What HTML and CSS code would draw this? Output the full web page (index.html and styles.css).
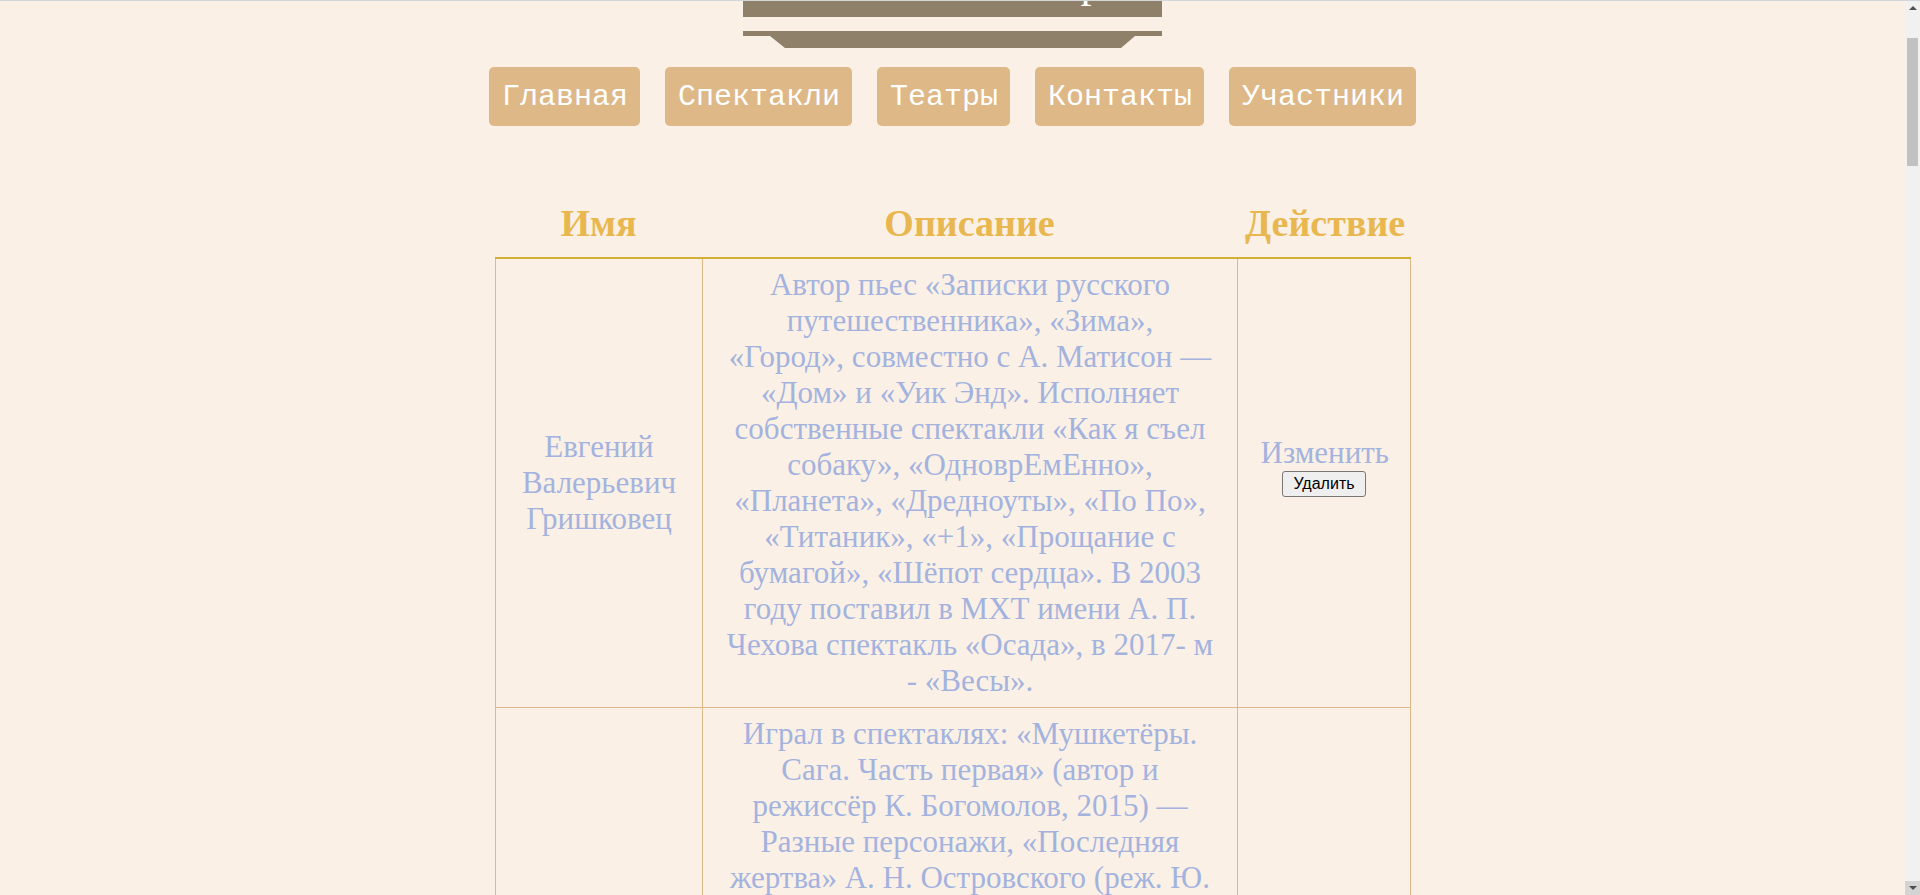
FILE: index.html
```html
<!DOCTYPE html>
<html lang="ru">
<head>
<meta charset="utf-8">
<title>Участники</title>
<link rel="stylesheet" href="styles.css">
</head>
<body>
<div class="topline"></div>
<div class="fake-scrollbar" aria-hidden="true">
  <div class="sb-btn sb-up"><span class="tri-up"></span></div>
  <div class="sb-thumb"></div>
  <div class="sb-fill"></div>
  <div class="sb-btn sb-down"><span class="tri-down"></span></div>
</div>
<header class="site-header">
  <div class="title-box"><h1 class="title">Любимый театр</h1></div>
  <div class="title-base"></div>
</header>
<nav class="nav">
  <a class="nav-btn" href="#">Главная</a>
  <a class="nav-btn" href="#">Спектакли</a>
  <a class="nav-btn" href="#">Театры</a>
  <a class="nav-btn" href="#">Контакты</a>
  <a class="nav-btn" href="#">Участники</a>
</nav>
<main class="content">
  <table class="people">
    <colgroup><col class="c-name"><col class="c-desc"><col class="c-act"></colgroup>
    <thead>
      <tr><th>Имя</th><th>Описание</th><th>Действие</th></tr>
    </thead>
    <tbody>
      <tr>
        <td>Евгений Валерьевич Гришковец</td>
        <td>Автор пьес «Записки русского путешественника», «Зима», «Город», совместно с А. Матисон — «Дом» и «Уик Энд». Исполняет собственные спектакли «Как я съел собаку», «ОдноврЕмЕнно», «Планета», «Дредноуты», «По По», «Титаник», «+1», «Прощание с бумагой», «Шёпот сердца». В 2003 году поставил в МХТ имени А. П. Чехова спектакль «Осада», в 2017- м - «Весы».</td>
        <td><a class="edit" href="#">Изменить</a><form class="del-form"><button type="button" class="del-btn">Удалить</button></form></td>
      </tr>
      <tr>
        <td>Игорь Альфредович Миркурбанов</td>
        <td>Играл в спектаклях: «Мушкетёры. Сага. Часть первая» (автор и режиссёр К. Богомолов, 2015) — Разные персонажи, «Последняя жертва» А. Н. Островского (реж. Ю. Бутусов, 2014) — Флор Федулыч Прибытков, «Карамазовы» по роману Ф. М. Достоевского (реж. К. Богомолов, 2013) — Фёдор Павлович Карамазов, «Идеальный муж. Комедия» (реж. К. Богомолов, 2013) — Лорд Горинг, «Околоноля» (реж. К. Богомолов, 2011) — Самуил Аронович. Лауреат премии «Золотая маска».</td>
        <td><a class="edit" href="#">Изменить</a><form class="del-form"><button type="button" class="del-btn">Удалить</button></form></td>
      </tr>
      <tr>
        <td>Константин Юрьевич Хабенский</td>
        <td>Народный артист России. Играл в спектаклях «Гамлет» (реж. Ю. Бутусов, 2005) — Гамлет, «Белая гвардия» М. А. Булгакова (реж. С. Женовач, 2004) — Алексей Турбин, «Кабала святош» (реж. А. Шапиро, 2001) — Людовик XIV, «Сирано де Бержерак» (реж. Н. Чусова, 2013) — Сирано де Бержерак, «Контрабас» П. Зюскинда (реж. Ю. Бутусов, 2015) — Музыкант. Основатель благотворительного фонда и художественный руководитель детских студий творческого развития.</td>
        <td><a class="edit" href="#">Изменить</a><form class="del-form"><button type="button" class="del-btn">Удалить</button></form></td>
      </tr>
      <tr>
        <td>Юлия Александровна Пересильд</td>
        <td>Заслуженная артистка России. Играла в спектаклях «Рассказы Шукшина» (реж. А. Херманис, 2008) — разные роли, «Гроза» А. Н. Островского (реж. А. Шапиро, 2011) — Катерина, «Пиковая дама» А. С. Пушкина (реж. К. Серебренников) — Лиза, «Человек-подушка» М. Макдонаха — Ариэль. Лауреат премий «Золотая маска» и «Хрустальная Турандот», основатель благотворительного фонда «Галчонок».</td>
        <td><a class="edit" href="#">Изменить</a><form class="del-form"><button type="button" class="del-btn">Удалить</button></form></td>
      </tr>
      <tr>
        <td>Сергей Витальевич Безруков</td>
        <td>Народный артист России, художественный руководитель Московского Губернского театра. Играл в спектаклях «Есенин» (реж. С. Безруков, 1995) — Сергей Есенин, «Борис Годунов» А. С. Пушкина (реж. Д. Донеллан, 2000) — Самозванец, «Сирано де Бержерак» Э. Ростана (2007) — Сирано, «Гамлет» В. Шекспира (реж. Ю. Бутусов, 2008) — Гамлет, «Калигула» А. Камю (реж. Э. Някрошюс) — Калигула, «Хулиган. Исповедь» — Поэт.</td>
        <td><a class="edit" href="#">Изменить</a><form class="del-form"><button type="button" class="del-btn">Удалить</button></form></td>
      </tr>
      <tr>
        <td>Чулпан Наилевна Хаматова</td>
        <td>Народная артистка России. Играла в спектаклях «Три товарища» Э. М. Ремарка (реж. Г. Волчек, 1999) — Патриция Хольман, «Голая пионерка» М. Кононова (реж. К. Серебренников, 2005) — Муся Кирпичникова, «Мастер и Маргарита» М. А. Булгакова (реж. Г. Волчек) — Маргарита, «Антоний и Клеопатра. Версия» (реж. Г. Волчек, 2006) — Клеопатра, «Бесстрашный мальчик» — Рассказчица. Лауреат премий «Золотая маска» и «Ника».</td>
        <td><a class="edit" href="#">Изменить</a><form class="del-form"><button type="button" class="del-btn">Удалить</button></form></td>
      </tr>
    </tbody>
  </table>
</main>
<script src="script.js"></script>
</body>
</html>
```
FILE: styles.css
```css
html {
  background: #faf0e6;
}
body {
  margin: 0 15px 0 0;
  background: #faf0e6;
  font-family: "Liberation Serif", "Times New Roman", serif;
  padding-bottom: 40px;
}
.topline {
  position: fixed;
  top: 0;
  left: 0;
  right: 0;
  height: 1px;
  background: #d2d5d9;
  z-index: 20;
}
.fake-scrollbar {
  position: fixed;
  top: 0;
  right: 0;
  bottom: 0;
  width: 15px;
  background: #f1f1f1;
  display: flex;
  flex-direction: column;
  z-index: 10;
}
.sb-btn {
  height: 15px;
  display: flex;
  align-items: center;
  justify-content: center;
  flex: none;
}
.sb-down {
  height: 14px;
  background: #d4d4d4;
}
.tri-up {
  width: 0;
  height: 0;
  border-left: 4px solid transparent;
  border-right: 4px solid transparent;
  border-bottom: 4px solid #505050;
}
.tri-down {
  width: 0;
  height: 0;
  border-left: 4px solid transparent;
  border-right: 4px solid transparent;
  border-top: 4px solid #505050;
}
.sb-thumb {
  flex: none;
  height: 128px;
  margin: 23px 2px 0 2px;
  background: #c1c1c1;
}
.sb-fill {
  flex: 1;
}
.site-header {
  width: 419px;
  margin: 0 auto;
}
.title-box {
  height: 77px;
  background: #8f806a;
  display: flex;
  align-items: flex-end;
  justify-content: center;
  box-sizing: border-box;
  padding-bottom: 12px;
}
.title {
  margin: 0;
  color: #ffffff;
  font-weight: normal;
  font-size: 44px;
  line-height: 44px;
  font-family: "Liberation Serif", serif;
}
.title-base {
  height: 17px;
  margin-top: 14px;
  background: #8f806a;
  clip-path: polygon(0 0, 100% 0, 100% 5px, 392px 5px, 378px 17px, 42px 17px, 27px 5px, 0 5px);
}
.nav {
  display: flex;
  justify-content: center;
  gap: 25px;
  margin-top: 19px;
}
.nav-btn {
  display: flex;
  align-items: center;
  height: 59px;
  box-sizing: border-box;
  padding: 0 12px 0 13px;
  background: #deb887;
  color: #ffffff;
  border-radius: 5px;
  text-decoration: none;
  font-family: "Liberation Mono", "Courier New", monospace;
  font-size: 30px;
}
.content {
  padding-top: 67px;
}
.people {
  margin: 0 auto;
  width: 916px;
  border-collapse: collapse;
  table-layout: fixed;
}
.c-name { width: 207px; }
.c-desc { width: 535px; }
.c-act { width: 173px; }
.people th {
  padding: 8px 8px 12px 8px;
  font-size: 38px;
  line-height: normal;
  font-weight: bold;
  color: #e9b74f;
  border-bottom: 2px solid #d4af37;
  text-align: center;
}
.people td {
  border: 1px solid #deb887;
  padding: 8px 22px 8px 23px;
  text-align: center;
  vertical-align: middle;
  color: #a3b3de;
  font-size: 31px;
  line-height: 36px;
}
.edit {
  color: #a3b3de;
  text-decoration: none;
}
.del-form {
  margin: 0 0 34px 0;
}
.del-btn {
  display: block;
  margin: 0 auto;
  font-family: "Liberation Sans", Arial, sans-serif;
  font-size: 16px;
  line-height: 18px;
  padding: 3px 10px;
  color: #000000;
  background: #efefef;
  border: 1px solid #767676;
  border-radius: 3px;
}
```
FILE: script.js
```js
window.scrollTo(0, 60);
window.addEventListener('load', function () {
  window.scrollTo(0, 60);
});
```
